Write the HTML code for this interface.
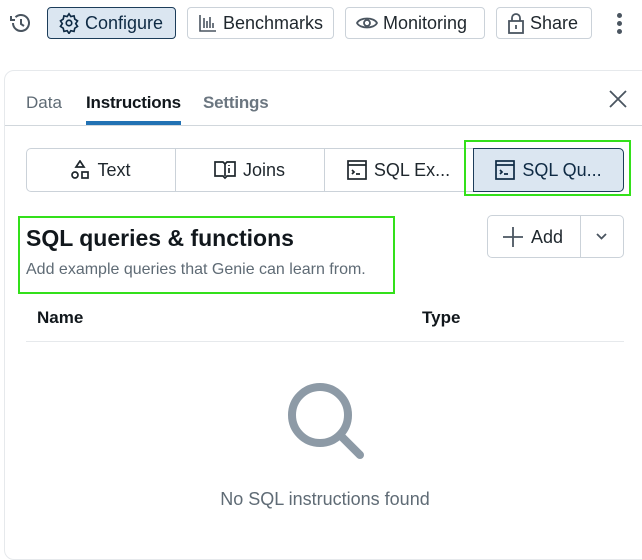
<!DOCTYPE html>
<html><head><meta charset="utf-8"><style>
*{box-sizing:border-box;margin:0;padding:0}
body{width:642px;height:545px;overflow:hidden;background:#fff;font-family:"Liberation Sans",sans-serif;color:#11171c;position:relative}
.a{position:absolute}
.btn{position:absolute;top:7px;height:32px;border:1px solid #cbd2d9;border-radius:4px;display:flex;align-items:center;font-size:18px;color:#1f272d;padding-left:10px;gap:5px}
.seg{position:absolute;top:148px;height:44px;display:flex;align-items:center;justify-content:center;gap:7px;font-size:18px;color:#1f272d}
svg{display:block}
</style></head><body>
<svg class="a" style="left:8px;top:12px" width="24" height="22" viewBox="0 0 24 22" fill="none" stroke="#4a5560" stroke-width="2"><path d="M5 11a8 8 0 1 0 2.5-5.8"/><path d="M3 4v4h4"/><path d="M13 7v5l3 2"/></svg>
<div class="btn" style="left:47px;width:129px;background:#dbe6f1;border-color:#1c3d5a;color:#0e2a44">
<svg width="22" height="22" viewBox="0 0 24 24" fill="none" stroke="#0e2a44" stroke-width="1.8"><circle cx="12" cy="12" r="3"/><path d="M12 2l2 3 3.5-.8.8 3.5 3 2-2 3 2 3-3 2-.8 3.5-3.5-.8-2 3-2-3-3.5.8-.8-3.5-3-2 2-3-2-3 3-2 .8-3.5 3.5.8z"/></svg>Configure</div>
<div class="btn" style="left:187px;width:147px">
<svg width="20" height="20" viewBox="0 0 20 20" fill="none" stroke="#4a5560" stroke-width="1.6"><path d="M2 2v16h16M6 15V5M9 15V8M12 15V4M15 15V10"/></svg>Benchmarks</div>
<div class="btn" style="left:345px;width:140px">
<svg width="22" height="20" viewBox="0 0 22 20" fill="none" stroke="#4a5560" stroke-width="1.8"><path d="M1 10c3-6 17-6 20 0-3 6-17 6-20 0z"/><circle cx="11" cy="10" r="3"/></svg>Monitoring</div>
<div class="btn" style="left:496px;width:96px">
<svg width="18" height="22" viewBox="0 0 18 22" fill="none" stroke="#4a5560" stroke-width="1.8"><rect x="2" y="9" width="14" height="12"/><path d="M5 9V6a4 4 0 0 1 8 0v3M9 13v4"/></svg>Share</div>
<div class="a" style="left:617px;top:13px;width:5px">
<div style="width:5px;height:5px;border-radius:50%;background:#4a5560;margin-bottom:3px"></div><div style="width:5px;height:5px;border-radius:50%;background:#4a5560;margin-bottom:3px"></div><div style="width:5px;height:5px;border-radius:50%;background:#4a5560"></div></div>

<div class="a" style="left:4px;top:70px;width:650px;height:490px;border:1px solid #e6e9ec;border-radius:10px"></div>
<div class="a" style="left:26px;top:93px;font-size:17px;color:#5f6b75">Data</div>
<div class="a" style="left:86px;top:93px;font-size:17px;font-weight:bold;color:#11171c;letter-spacing:-0.2px">Instructions</div>
<div class="a" style="left:203px;top:93px;font-size:17px;font-weight:bold;color:#6b7680;letter-spacing:-0.2px">Settings</div>
<div class="a" style="left:86px;top:121px;width:95px;height:4px;background:#2272b4"></div>
<div class="a" style="left:5px;top:125px;width:637px;height:1px;background:#d1d7dc"></div>
<svg class="a" style="left:609px;top:90px" width="18" height="18" viewBox="0 0 18 18" stroke="#4a5560" stroke-width="1.8"><path d="M1 1l16 16M17 1L1 17"/></svg>

<div class="a" style="left:26px;top:148px;width:598px;height:44px;border:1px solid #cbd2d9;border-radius:5px"></div>
<div class="seg" style="left:26px;width:149px"><svg width="20" height="20" viewBox="0 0 20 20" fill="none" stroke="#1f272d" stroke-width="1.7"><path d="M10 1l4 6H6z"/><circle cx="5" cy="15" r="3"/><rect x="12" y="12" width="6" height="6"/></svg>Text</div>
<div class="a" style="left:175px;top:148px;width:1px;height:44px;background:#cbd2d9"></div>
<div class="seg" style="left:175px;width:149px"><svg width="22" height="20" viewBox="0 0 22 20" fill="none" stroke="#1f272d" stroke-width="1.7"><path d="M1 2h8l2 2 2-2h8v14h-8l-2 2-2-2H1z"/><path d="M11 4v12M15 8v5M15 5v1"/></svg>Joins</div>
<div class="a" style="left:324px;top:148px;width:1px;height:44px;background:#cbd2d9"></div>
<div class="seg" style="left:324px;width:149px"><svg width="20" height="20" viewBox="0 0 20 20" fill="none" stroke="#1f272d" stroke-width="1.7"><rect x="1" y="1" width="18" height="18"/><path d="M1 5h18M5 10l2 2-2 2M9 14h4"/></svg>SQL Ex...</div>
<div class="seg" style="left:473px;width:151px;background:#dbe6f1;border:1px solid #1c3d5a;border-radius:0 5px 5px 0;color:#0e2a44"><svg width="20" height="20" viewBox="0 0 20 20" fill="none" stroke="#0e2a44" stroke-width="1.7"><rect x="1" y="1" width="18" height="18"/><path d="M1 5h18M5 10l2 2-2 2M9 14h4"/></svg>SQL Qu...</div>
<div class="a" style="left:464px;top:140px;width:167px;height:56px;border:2px solid #33e01a"></div>

<div class="a" style="left:26px;top:225px;font-size:23px;font-weight:bold;color:#11171c">SQL queries &amp; functions</div>
<div class="a" style="left:26px;top:261px;font-size:16px;color:#5f6b75">Add example queries that Genie can learn from.</div>
<div class="a" style="left:18px;top:216px;width:377px;height:78px;border:2px solid #33e01a"></div>

<div class="a" style="left:487px;top:215px;width:137px;height:43px;border:1px solid #cbd2d9;border-radius:5px"></div>
<div class="a" style="left:580px;top:215px;width:1px;height:43px;background:#cbd2d9"></div>
<svg class="a" style="left:503px;top:227px" width="20" height="20" viewBox="0 0 20 20" stroke="#4a5560" stroke-width="1.8"><path d="M10 0v20M0 10h20"/></svg>
<div class="a" style="left:531px;top:227px;font-size:18px;color:#1f272d">Add</div>
<svg class="a" style="left:596px;top:233px" width="11" height="7" viewBox="0 0 11 7" fill="none" stroke="#4a5560" stroke-width="1.8"><path d="M1 1l4.5 4.5L10 1"/></svg>

<div class="a" style="left:37px;top:308px;font-size:17px;font-weight:bold">Name</div>
<div class="a" style="left:422px;top:308px;font-size:17px;font-weight:bold">Type</div>
<div class="a" style="left:26px;top:341px;width:598px;height:1px;background:#e6e9ec"></div>

<svg class="a" style="left:285px;top:380px" width="84" height="80" viewBox="0 0 84 80" fill="none" stroke="#8d9aa6" stroke-width="8"><circle cx="35" cy="35" r="28"/><path d="M55 55l20 20" stroke-linecap="round"/></svg>
<div class="a" style="left:0;width:650px;top:489px;text-align:center;font-size:18px;color:#5f6b75">No SQL instructions found</div>
</body></html>
